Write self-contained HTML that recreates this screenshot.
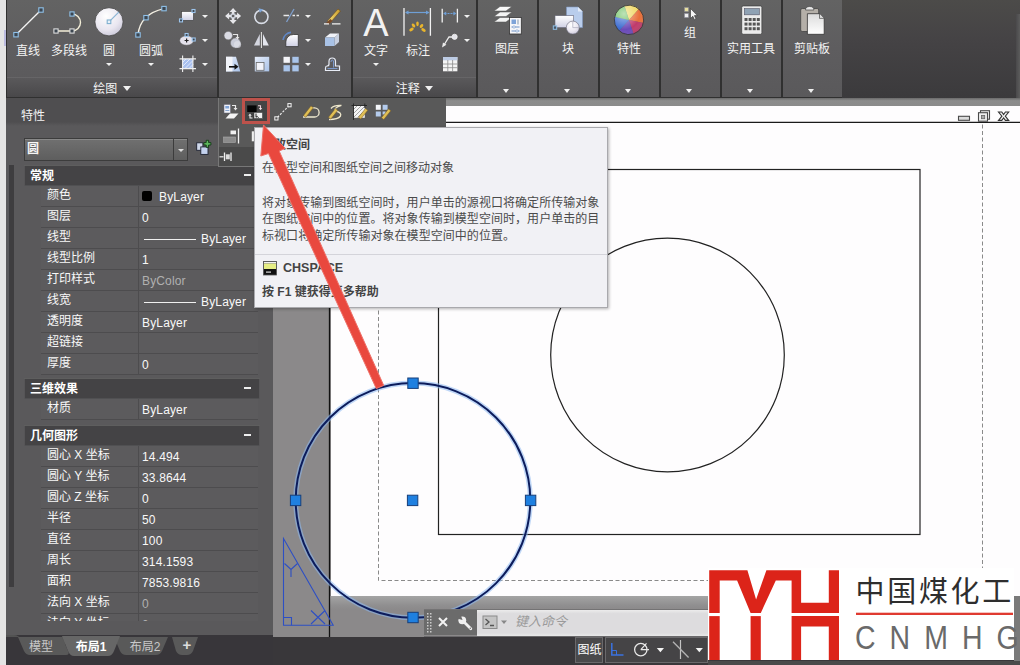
<!DOCTYPE html>
<html lang="zh">
<head>
<meta charset="utf-8">
<title>AutoCAD</title>
<style>
html,body{margin:0;padding:0;}
body{width:1020px;height:665px;overflow:hidden;position:relative;background:#3a3a3a;font-family:"Liberation Sans","Noto Sans CJK SC",sans-serif;font-size:12px;color:#eee;}
.abs{position:absolute;}
#stage{position:absolute;left:0;top:0;width:1020px;height:665px;overflow:hidden;}
/* ribbon */
#ribbon{left:6px;top:0;width:1014px;height:98px;background:#4a4a4a;}
.rp{position:absolute;top:0;height:96.500px;background:linear-gradient(#636363,#5e5d5f 50%,#5a595b);}
.rpt{position:absolute;left:0;right:0;bottom:0;height:19px;background:linear-gradient(#5a595b,#49484a);border-top:1px solid #666567;color:#f4f4f4;font-size:12px;line-height:22px;text-align:center;}
.lbl{position:absolute;color:#f4f4f4;font-size:12px;white-space:nowrap;transform:translateX(-50%);line-height:14px;}
.ti{display:inline-block;width:0;height:0;border-left:4px solid transparent;border-right:4px solid transparent;border-top:5px solid #f0f0f0;vertical-align:middle;margin-left:2px;margin-top:-2px;}
.tri{position:absolute;width:0;height:0;border-left:3px solid transparent;border-right:3px solid transparent;border-top:3.500px solid #f0f0f0;margin-left:1px;margin-top:0.500px;}
/* properties */
#props{left:6px;top:98px;width:267px;height:537px;background:#5a595b;}
.sec{position:absolute;left:18px;width:236px;height:20px;background:#444345;border-top:1px solid #5e5e5e;box-shadow:inset 1px 0 0 #565557,inset -1px 0 0 #565557,inset 0 -1px 0 #505052;color:#fff;font-weight:bold;font-size:12px;line-height:20px;}
.sec span{position:absolute;left:6px;top:0;}
.sec i{position:absolute;right:9px;top:8px;width:7px;height:2px;background:#eee;}
.row{position:absolute;left:35px;width:217px;height:20px;border-bottom:1px solid #4d4c4e;background:#5c5b5d;color:#f8f8f8;font-size:12px;line-height:19px;white-space:nowrap;}
.row .k{position:absolute;left:6px;top:0;}
.row .v{position:absolute;left:97px;top:0;right:0;height:20px;border-left:1px solid #4d4c4e;padding-left:3px;letter-spacing:0.150px;line-height:23px;}
.sw{position:absolute;left:3px;top:5px;width:10px;height:10px;background:#000;border-radius:2px;}
.ln{position:absolute;left:5px;top:11px;width:52px;height:1px;background:#f0f0f0;}
.dim{color:#b0b0b0;}
.t2{border-left-width:3.700px;border-right-width:3.700px;border-top-width:4px;margin-left:0.300px;}
</style>
</head>
<body>
<div id="stage">
<!-- BASE -->
<div class="abs" style="left:0;top:0;width:6px;height:665px;background:#e4e4e4;"></div>
<div class="abs" style="left:3.500px;top:30px;width:2px;height:16px;background:#a0a0dc;opacity:0.6;"></div>
<div class="abs" style="left:6px;top:0;width:1014px;height:99px;background:#303030;"></div>
<div class="abs" style="left:842px;top:0;width:178px;height:98px;background:linear-gradient(#4c4b49,#454345 40%,#3b3a3c);"></div>
<div class="abs" style="left:1016px;top:14px;width:4px;height:84px;background:linear-gradient(90deg,#4a494b,#5c5c5c);"></div>
<!-- ribbon panels -->
<div class="rp" style="left:7px;width:210px;"><div class="rpt">绘图 <span class="ti"></span></div></div>
<div class="rp" style="left:219px;width:132px;"></div>
<div class="rp" style="left:353px;width:123px;"><div class="rpt">注释 <span class="ti"></span></div></div>
<div class="rp" style="left:478px;width:59px;"></div>
<div class="rp" style="left:539px;width:59px;"></div>
<div class="rp" style="left:600px;width:59px;"></div>
<div class="rp" style="left:661px;width:59px;"></div>
<div class="rp" style="left:722px;width:59px;"></div>
<div class="rp" style="left:783px;width:59px;"></div>
<!-- ribbon labels -->
<div class="lbl" style="left:28px;top:44px;">直线</div>
<div class="lbl" style="left:69px;top:44px;">多段线</div>
<div class="lbl" style="left:109px;top:44px;">圆</div>
<div class="lbl" style="left:151px;top:44px;">圆弧</div>
<div class="lbl" style="left:376px;top:44px;">文字</div>
<div class="lbl" style="left:418px;top:44px;">标注</div>
<div class="lbl" style="left:507px;top:42px;">图层</div>
<div class="lbl" style="left:568px;top:42px;">块</div>
<div class="lbl" style="left:629px;top:42px;">特性</div>
<div class="lbl" style="left:690px;top:26px;">组</div>
<div class="lbl" style="left:751px;top:42px;">实用工具</div>
<div class="lbl" style="left:812px;top:42px;">剪贴板</div>
<div class="abs" style="left:363px;top:1px;font-size:38px;line-height:44px;color:#f2f2f2;width:26px;text-align:center;">A</div>
<!-- ribbon triangles -->
<div class="tri" style="left:105px;top:62px;"></div>
<div class="tri" style="left:147px;top:62px;"></div>
<div class="tri" style="left:201px;top:14px;"></div>
<div class="tri" style="left:201px;top:38px;"></div>
<div class="tri" style="left:201px;top:62px;"></div>
<div class="tri" style="left:304px;top:14px;"></div>
<div class="tri" style="left:304px;top:38px;"></div>
<div class="tri" style="left:304px;top:62px;"></div>
<div class="tri" style="left:372px;top:62px;"></div>
<div class="tri" style="left:463px;top:14px;"></div>
<div class="tri" style="left:463px;top:38px;"></div>
<div class="tri t2" style="left:503px;top:88px;"></div>
<div class="tri t2" style="left:564px;top:88px;"></div>
<div class="tri t2" style="left:625px;top:88px;"></div>
<div class="tri t2" style="left:686px;top:88px;"></div>
<div class="tri t2" style="left:747px;top:88px;"></div>
<div class="tri t2" style="left:808px;top:88px;"></div>

<svg class="abs" style="left:0;top:0;" width="1020" height="100" viewBox="0 0 1020 100">
<defs>
<linearGradient id="gLav" x1="0" y1="0" x2="0" y2="1"><stop offset="0" stop-color="#ffffff"/><stop offset="1" stop-color="#cfd0e4"/></linearGradient>
<radialGradient id="gCirc" cx="0.4" cy="0.3" r="0.8"><stop offset="0" stop-color="#ffffff"/><stop offset="0.6" stop-color="#e9e6f0"/><stop offset="1" stop-color="#c4c2d4"/></radialGradient>
<linearGradient id="gBlue" x1="0" y1="0" x2="1" y2="1"><stop offset="0" stop-color="#e8eefa"/><stop offset="1" stop-color="#a9c2e8"/></linearGradient>
<linearGradient id="gPen" x1="0" y1="0" x2="1" y2="0"><stop offset="0" stop-color="#f7e27a"/><stop offset="1" stop-color="#c89a2a"/></linearGradient>
<radialGradient id="gShine" cx="0.4" cy="0.25" r="0.9"><stop offset="0" stop-color="#fff" stop-opacity="0.55"/><stop offset="0.6" stop-color="#fff" stop-opacity="0"/><stop offset="1" stop-color="#000" stop-opacity="0.25"/></radialGradient>
<linearGradient id="gPaper" x1="0" y1="0" x2="0" y2="1"><stop offset="0" stop-color="#dcdcdc"/><stop offset="1" stop-color="#ffffff"/></linearGradient>
</defs>
<!-- line -->
<line x1="16" y1="34.700" x2="41" y2="10" stroke="#f4f4f4" stroke-width="1.300"/>
<rect x="13.8" y="32.5" width="4.4" height="4.4" fill="#3c4650" stroke="#8fc0e8" stroke-width="1.1"/><rect x="38.8" y="7.8" width="4.4" height="4.4" fill="#3c4650" stroke="#8fc0e8" stroke-width="1.1"/>
<!-- polyline -->
<path d="M56 31 H72 A8.500 8.500 0 0 0 72 14" fill="none" stroke="#f3eed8" stroke-width="1.400"/>
<rect x="53.9" y="28.9" width="4.2" height="4.2" fill="#3c4650" stroke="#ddd" stroke-width="1.1"/><rect x="69.9" y="28.9" width="4.2" height="4.2" fill="#3c4650" stroke="#ddd" stroke-width="1.1"/><rect x="69.9" y="11.9" width="4.2" height="4.2" fill="#3c4650" stroke="#8fc0e8" stroke-width="1.1"/>
<!-- circle -->
<circle cx="109" cy="21.800" r="14.100" fill="url(#gCirc)" stroke="#444" stroke-width="0.800"/>
<line x1="109" y1="21.800" x2="119" y2="11.800" stroke="#8ab4d4" stroke-width="1.200"/>
<rect x="107.2" y="20.0" width="3.6" height="3.6" fill="#e8f0f8" stroke="#7fb0d0" stroke-width="1.1"/>
<!-- arc -->
<path d="M138 34.900 Q140 14 164 8.600" fill="none" stroke="#f4f0e4" stroke-width="1.400"/>
<rect x="135.8" y="32.7" width="4.4" height="4.4" fill="#3c4650" stroke="#8fc0e8" stroke-width="1.1"/><rect x="143.8" y="15.5" width="4.4" height="4.4" fill="#3c4650" stroke="#8fc0e8" stroke-width="1.1"/><rect x="161.8" y="6.4" width="4.4" height="4.4" fill="#3c4650" stroke="#8fc0e8" stroke-width="1.1"/>
<!-- rect small -->
<rect x="181.500" y="11.400" width="12" height="9" fill="url(#gLav)" stroke="#444" stroke-width="0.700"/>
<rect x="179.5" y="18.9" width="3" height="3" fill="#3c4650" stroke="#9cc4ec" stroke-width="1.1"/><rect x="192.0" y="9.5" width="3" height="3" fill="#3c4650" stroke="#9cc4ec" stroke-width="1.1"/>
<!-- ellipse small -->
<ellipse cx="186.600" cy="40.500" rx="7" ry="4.800" fill="#e4e2ec" stroke="#555" stroke-width="0.600"/>
<path d="M184.600 40.500 h4 M186.600 38.500 v4" stroke="#222" stroke-width="1.200"/>
<rect x="185.1" y="33.5" width="3" height="3" fill="#3c4650" stroke="#9cc4ec" stroke-width="1.1"/><rect x="192.2" y="38.0" width="3" height="3" fill="#3c4650" stroke="#9cc4ec" stroke-width="1.1"/>
<!-- hatch small -->
<rect x="182.600" y="58.900" width="10.300" height="9.700" fill="#a9c0ee"/>
<path d="M183 62 l3 -3 M183 66 l7 -7 M185 68.500 l8 -8 M189 68.500 l4 -4" stroke="#dfe8fb" stroke-width="1"/>
<path d="M182.600 55.500 V72 M192.900 55.500 V72 M179.500 58.900 H196 M179.500 68.600 H196" stroke="#f0f0f0" stroke-width="1.100" fill="none"/>
<!-- MODIFY row1 -->
<!-- move -->
<g fill="#e6e6ea" stroke="none"><path d="M233.100 8 l3.600 4 h-2.300 v2.400 h-2.600 v-2.400 h-2.300z"/><path d="M233.100 24 l3.600 -4 h-2.300 v-2.400 h-2.600 v2.400 h-2.300z"/><path d="M225.100 16 l4 -3.600 v2.300 h2.400 v2.600 h-2.400 v2.300z"/><path d="M241.100 16 l-4 -3.600 v2.300 h-2.400 v2.600 h2.400 v2.300z"/></g>
<rect x="231.300" y="14.200" width="3.600" height="3.600" fill="none" stroke="#cfd4e0" stroke-width="1"/>
<!-- rotate -->
<circle cx="261.400" cy="16.800" r="6.600" fill="none" stroke="#d8dce6" stroke-width="1.600"/>
<path d="M258.500 8.300 l5 1.200 l-3.600 3.200z" fill="#7fa6d8"/>
<!-- trim -->
<path d="M283.500 15.500 h5.500 M292.500 15.500 h2.500 M296.500 15.500 h2.500" stroke="#e8e8e8" stroke-width="1.300"/>
<path d="M286.500 22 L294 9" stroke="#7f9fcc" stroke-width="1.300"/>
<!-- erase -->
<path d="M327.500 21 L338 9 L340.500 11 L330 23z" fill="url(#gPen)" stroke="#6b4a1c" stroke-width="0.600"/>
<path d="M326 23 l4.500 -4 l2 2 l-4 3.500z" fill="#7a4a2a"/>
<path d="M324 23.800 H329 M332 23.800 H340.500" stroke="#f2f2f2" stroke-width="1.300"/>
<!-- row2: copy -->
<circle cx="228.300" cy="35.600" r="4.200" fill="#dadbe4" stroke="#777" stroke-width="0.500"/>
<circle cx="235.500" cy="43" r="5" fill="#c9ccd8" stroke="#777" stroke-width="0.500"/>
<circle cx="237.500" cy="44.500" r="3.600" fill="#dfe1ea" opacity="0.700"/>
<path d="M233 34.500 h4.500 v3" fill="none" stroke="#e4e4e4" stroke-width="1.200"/><path d="M235.500 37 h4 l-2 2.600z" fill="#e4e4e4"/>
<!-- mirror -->
<path d="M259.800 34 V45.500 H254 Z" fill="#d4d6e0"/><path d="M263 34 V45.500 H268.800 Z" fill="#e4e6ee"/>
<line x1="261.400" y1="32" x2="261.400" y2="48" stroke="#e8e8e8" stroke-width="1"/>
<!-- fillet -->
<path d="M285.800 46.600 V42 A7.500 7.500 0 0 1 293.300 34.500 H298.300 V46.600 Z" fill="url(#gLav)" stroke="#333" stroke-width="0.800"/>
<path d="M283 40 A9 9 0 0 1 291 32.400" fill="none" stroke="#5f86c4" stroke-width="1.600"/>
<!-- box -->
<path d="M325 37.500 l5 -4 h9 l-4.500 4z" fill="#f0f2f8"/><path d="M334.500 37.500 l4.500 -4 v8.500 l-4.500 4z" fill="#c8d0e0"/><rect x="325" y="37.500" width="9.500" height="8.500" fill="#a9c2e6"/>

<!-- row3: stretch -->
<path d="M226 56.800 H236 L240.300 71.400 H226 Z" fill="url(#gBlue)"/><rect x="226" y="56.800" width="6.500" height="14.600" fill="#f2f4fa"/>
<path d="M229 66.800 h6" stroke="#111" stroke-width="1.600"/><path d="M234.500 63.800 l4 3 l-4 3z" fill="#111"/>
<!-- scale -->
<rect x="254.800" y="56.800" width="14.400" height="14.600" fill="url(#gBlue)"/>
<rect x="256.200" y="62.500" width="7.800" height="7.800" fill="#f2f3fa" stroke="#666" stroke-width="0.800"/>
<!-- array -->
<rect x="283.500" y="56.800" width="6.400" height="6" fill="#f4f4f8"/>
<rect x="292.300" y="56.800" width="6.400" height="6" fill="#a9c4ea"/>
<rect x="283.500" y="65.200" width="6.400" height="6.200" fill="#a9c4ea"/>
<rect x="292.300" y="65.200" width="6.400" height="6.200" fill="#a9c4ea"/>
<!-- offset -->
<path d="M325.500 70.500 H339.500 V66 H335.500 V61.500 Q335.500 58 332.200 58 Q329 58 329 61.500 V64 Q329 66 327 66 Q325.500 66 325.500 68 Z" fill="none" stroke="#e8ecf6" stroke-width="1.200"/>
<path d="M327.500 68.600 H337.500 M331 62 Q331 60 332.300 60 Q333.600 60 333.600 62 V67.500" fill="none" stroke="#7e9fd4" stroke-width="1"/>
<!-- ANNOTATE -->
<path d="M404 8 V35.800 M430.400 8 V35.800" stroke="#f2f2f2" stroke-width="1.300"/>
<path d="M406 12.500 H428.500" stroke="#6f9fd6" stroke-width="1.200"/><path d="M405 12.500 l3.500 -2 v4z M429.500 12.500 l-3.500 -2 v4z" fill="#6f9fd6"/>
<g fill="#e9b52c"><ellipse cx="411.500" cy="29.500" rx="2.400" ry="1.500" transform="rotate(-30 411.500 29.500)"/><ellipse cx="413.500" cy="25.500" rx="2.200" ry="1.400" transform="rotate(50 413.500 25.500)"/><ellipse cx="417.500" cy="23.800" rx="1.300" ry="2.400"/><ellipse cx="421.500" cy="26" rx="2.200" ry="1.400" transform="rotate(-50 421.500 26)"/><ellipse cx="423.500" cy="30" rx="2.400" ry="1.500" transform="rotate(30 423.500 30)"/></g>
<path d="M442.200 8.800 V22.600 M457.400 8.800 V22.600" stroke="#f2f2f2" stroke-width="1.300"/>
<path d="M444.500 13.500 H455" stroke="#6f9fd6" stroke-width="1.200" stroke-dasharray="2 1"/><path d="M443.200 13.500 l3 -2 v4z M456.400 13.500 l-3 -2 v4z" fill="#6f9fd6"/>
<circle cx="454.600" cy="36.800" r="2.600" fill="#e4e4ea" stroke="#f4f4f4" stroke-width="0.800"/>
<path d="M452 37 H449 L444 45" fill="none" stroke="#ececec" stroke-width="1.300"/><path d="M442 47.500 l1 -5 l3.400 2.200z" fill="#ececec"/>
<rect x="443" y="57" width="14.400" height="14.300" fill="#f4f4f4"/><rect x="443" y="57" width="14.400" height="3.300" fill="#bccbe4"/>
<path d="M447.800 60 V71.300 M452.600 60 V71.300 M443 64 H457.400 M443 67.700 H457.400" stroke="#8a8a8a" stroke-width="0.800"/>
<!-- LAYERS -->
<g stroke="#555" stroke-width="0.500"><path d="M494 22 l6 -4.500 h12 l-6 4.500z" fill="#f4f4f4"/><path d="M494 16.500 l6 -4.500 h12 l-6 4.500z" fill="#f4f4f4"/><path d="M494 11 l6 -4.500 h12 l-6 4.500z" fill="#fafafa"/></g>
<rect x="509.500" y="17.500" width="11.800" height="16.500" fill="#f6f6f8" stroke="#333" stroke-width="0.800"/>
<rect x="511.500" y="19.500" width="4.500" height="4.500" fill="#7fa4d8"/><path d="M518 19.500 v5" stroke="#9ab" stroke-width="1.200"/>
<path d="M511.500 27 h8 M511.500 31 h8" stroke="#6f93c8" stroke-width="1"/><circle cx="514" cy="27" r="1.200" fill="#fff" stroke="#6f93c8" stroke-width="0.600"/><circle cx="517" cy="31" r="1.200" fill="#fff" stroke="#6f93c8" stroke-width="0.600"/>
<!-- BLOCK -->
<path d="M566.500 7 H578 L582.500 11.500 V27.600 H566.500 Z" fill="#b9cdec" stroke="#7f97c0" stroke-width="0.600"/><path d="M578 7 V11.500 H582.500z" fill="#e4ecf8"/>
<rect x="555" y="15.700" width="18.700" height="11.900" fill="url(#gLav)" stroke="#667" stroke-width="0.600"/>
<circle cx="572.800" cy="27.600" r="6.500" fill="url(#gCirc)" stroke="#667" stroke-width="0.600"/><path d="M572.800 21 V27.600 H579.300" fill="none" stroke="#aab" stroke-width="0.700"/>
<rect x="553.300" y="25.900" width="3.400" height="3.400" fill="#4a5666" stroke="#8fc0e8" stroke-width="1"/>
<!-- COLOR WHEEL -->
<g transform="translate(629 19.900) rotate(-18)">
<path d="M0 0 L0 -14.700 A14.700 14.700 0 0 1 12.730 -7.350 Z" fill="#f0d860"/>
<path d="M0 0 L12.730 -7.350 A14.700 14.700 0 0 1 12.730 7.350 Z" fill="#e8703a"/>
<path d="M0 0 L12.730 7.350 A14.700 14.700 0 0 1 0 14.700 Z" fill="#c03a6a"/>
<path d="M0 0 L0 14.700 A14.700 14.700 0 0 1 -12.730 7.350 Z" fill="#6a4ab8"/>
<path d="M0 0 L-12.730 7.350 A14.700 14.700 0 0 1 -12.730 -7.350 Z" fill="#3a6ad0"/>
<path d="M0 0 L-12.730 -7.350 A14.700 14.700 0 0 1 0 -14.700 Z" fill="#6cc060"/>
<circle r="14.700" fill="url(#gShine)"/>
<circle r="14.700" fill="none" stroke="#3a3a3a" stroke-width="0.800"/>
</g>
<!-- GROUP -->
<rect x="684.500" y="7.500" width="4" height="4" fill="#e8e0a0" stroke="#889" stroke-width="0.500"/><rect x="684.500" y="13.500" width="4" height="4" fill="#f0f0f0" stroke="#889" stroke-width="0.500"/>
<path d="M690.500 8.500 V18.500 L692.800 16.200 L694.500 19.800 L696 19 L694.400 15.600 H697.400 Z" fill="#f6f6f6" stroke="#333" stroke-width="0.600"/>
<!-- CALC -->
<rect x="741.700" y="5.900" width="20.200" height="28.400" rx="1.500" fill="#ececec" stroke="#444" stroke-width="0.800"/>
<rect x="744.300" y="8.600" width="15" height="6.200" fill="#8fa2b4" stroke="#556" stroke-width="0.600"/>
<g fill="#555"><rect x="744.500" y="18" width="3" height="3"/><rect x="748.600" y="18" width="3" height="3"/><rect x="752.700" y="18" width="3" height="3"/><rect x="756.800" y="18" width="3" height="3"/><rect x="744.500" y="22.600" width="3" height="3"/><rect x="748.600" y="22.600" width="3" height="3"/><rect x="752.700" y="22.600" width="3" height="3"/><rect x="756.800" y="22.600" width="3" height="3"/><rect x="744.500" y="27.200" width="3" height="3"/><rect x="748.600" y="27.200" width="3" height="3"/><rect x="752.700" y="27.200" width="3" height="3"/><rect x="756.800" y="27.200" width="3" height="3"/></g>
<!-- CLIPBOARD -->
<rect x="800.700" y="8.500" width="18" height="23" rx="1.500" fill="#b4afa8" stroke="#444" stroke-width="0.800"/>
<path d="M805.500 10 Q805.500 6.500 809.700 6.500 Q813.900 6.500 813.900 10 Z" fill="#e8e8e8" stroke="#444" stroke-width="0.700"/>
<path d="M807.400 13.700 H819.500 L824.200 18.400 V34.300 H807.400 Z" fill="url(#gPaper)" stroke="#333" stroke-width="0.800"/><path d="M819.500 13.700 V18.400 H824.200" fill="#ddd" stroke="#333" stroke-width="0.600"/>
</svg>

<div id="props" class="abs">
<div class="abs" style="left:0;top:0;width:267px;height:28px;background:linear-gradient(#4f4e50 85%,#5a595b);"></div>
<div class="abs" style="left:15px;top:9.500px;font-size:12px;color:#f4f4f4;line-height:16px;">特性</div>
<div class="abs" style="left:18px;top:40px;width:148px;height:21px;background:linear-gradient(#707070,#5e5e5e);border:1px solid #3c3c3c;border-right:none;box-shadow:inset 0 1px 0 #888;"><span style="position:absolute;left:2px;top:2px;font-size:12px;font-weight:bold;color:#f6f6f6;line-height:16px;">圆</span></div>
<div class="abs" style="left:167px;top:40px;width:13px;height:21px;background:linear-gradient(#707070,#5e5e5e);border:1px solid #3c3c3c;box-shadow:inset 0 1px 0 #888;"><span class="tri" style="left:3px;top:9px;border-left-width:3px;border-right-width:3px;border-top-color:#ddd;"></span></div>
<svg class="abs" style="left:188px;top:40px;" width="22" height="20" viewBox="194 138 22 20">
<rect x="196.700" y="142.800" width="6.200" height="7.500" fill="#cfd8ea" stroke="#1c2030" stroke-width="0.900"/>
<rect x="200.800" y="146.900" width="7.200" height="7.500" fill="#c4d2ee" stroke="#1c2030" stroke-width="0.900"/>
<path d="M206.200 140.300 h2.400 v2.300 h2.300 v2.400 h-2.300 v2.300 h-2.400 v-2.300 h-2.300 v-2.400 h2.300z" fill="#5fb860" stroke="#123a14" stroke-width="0.900"/>
</svg>
<div class="abs" style="left:3px;top:67px;width:4.500px;height:422px;background:#3e3d3f;"></div>
<div class="abs" style="left:0;top:62px;width:267px;height:461px;overflow:hidden;"><div class="abs" style="left:0;top:-62px;">
<div class="sec" style="top:67px;"><span>常规</span><i></i></div>
<div class="row" style="top:88px;"><span class="k">颜色</span><span class="v "><i class="sw"></i><span style="margin-left:17px">ByLayer</span></span></div>
<div class="row" style="top:109px;"><span class="k">图层</span><span class="v ">0</span></div>
<div class="row" style="top:130px;"><span class="k">线型</span><span class="v "><i class="ln"></i><span style="margin-left:59px">ByLayer</span></span></div>
<div class="row" style="top:151px;"><span class="k">线型比例</span><span class="v ">1</span></div>
<div class="row" style="top:172px;"><span class="k">打印样式</span><span class="v dim">ByColor</span></div>
<div class="row" style="top:193px;"><span class="k">线宽</span><span class="v "><i class="ln"></i><span style="margin-left:59px">ByLayer</span></span></div>
<div class="row" style="top:214px;"><span class="k">透明度</span><span class="v ">ByLayer</span></div>
<div class="row" style="top:235px;"><span class="k">超链接</span><span class="v "></span></div>
<div class="row" style="top:256px;"><span class="k">厚度</span><span class="v ">0</span></div>
<div class="sec" style="top:280px;"><span>三维效果</span><i></i></div>
<div class="row" style="top:301px;"><span class="k">材质</span><span class="v ">ByLayer</span></div>
<div class="sec" style="top:327px;"><span>几何图形</span><i></i></div>
<div class="row" style="top:348px;"><span class="k">圆心 X 坐标</span><span class="v ">14.494</span></div>
<div class="row" style="top:369px;"><span class="k">圆心 Y 坐标</span><span class="v ">33.8644</span></div>
<div class="row" style="top:390px;"><span class="k">圆心 Z 坐标</span><span class="v ">0</span></div>
<div class="row" style="top:411px;"><span class="k">半径</span><span class="v ">50</span></div>
<div class="row" style="top:432px;"><span class="k">直径</span><span class="v ">100</span></div>
<div class="row" style="top:453px;"><span class="k">周长</span><span class="v ">314.1593</span></div>
<div class="row" style="top:474px;"><span class="k">面积</span><span class="v ">7853.9816</span></div>
<div class="row" style="top:495px;"><span class="k">法向 X 坐标</span><span class="v dim">0</span></div>
<div class="row" style="top:516px;"><span class="k">法向 Y 坐标</span><span class="v dim">0</span></div>
</div></div>
</div>
<div class="abs" style="left:6px;top:635px;width:267px;height:30px;background:#38363a;"></div>
<svg class="abs" style="left:6px;top:635px;" width="330" height="30" viewBox="0 0 330 30">
<path d="M0 0 H8 Q13 0 15 5 L19 15 Q21 20 26 20 H50 Q54 20 56 16 L62 2 H0Z" fill="#535353"/>
<path d="M12 2 H56 L62 16 Q64 20 60 20 H24 Q20 20 18 16 Z" fill="#595959"/>
<path d="M108 2 H162 L156 16 Q154 20 150 20 H120 Q116 20 114 16 Z" fill="#595959"/>
<path d="M166 2 H192 L187 16 Q185 20 181 20 H176 Q172 20 170 16 Z" fill="#595959"/>
<path d="M56 1 H114 L108 16 Q106 21 102 21 H68 Q64 21 62 16 Z" fill="#666"/>
</svg>
<div class="lbl" style="left:41px;top:640px;color:#c8c8c8;">模型</div>
<div class="lbl" style="left:91px;top:640px;color:#fff;font-weight:bold;">布局1</div>
<div class="lbl" style="left:145px;top:640px;color:#c8c8c8;">布局2</div>
<div class="lbl" style="left:187px;top:638px;color:#ddd;font-weight:bold;font-size:15px;">+</div>


<!-- drawing area -->
<div class="abs" style="left:273px;top:98px;width:747px;height:539px;background:#8b898a;"></div>
<div class="abs" style="left:445px;top:98px;width:575px;height:9px;background:linear-gradient(#6a6a6a,#8c8c8c 30%,#8b8b8b);"></div>
<div class="abs" style="left:330px;top:596px;width:690px;height:14px;background:linear-gradient(#a4a4a4,#8f8e8f 70%,#8b898a);"></div>
<div class="abs" style="left:331px;top:106px;width:689px;height:490px;background:#fefdfe;"></div>
<svg class="abs" style="left:0;top:0;" width="1020" height="665" viewBox="0 0 1020 665">
<line x1="329.5" y1="98" x2="329.5" y2="637" stroke="#111" stroke-width="1.3"/>
<line x1="446" y1="122.3" x2="1020" y2="122.3" stroke="#1a1a1a" stroke-width="1.2"/>
<path d="M378.5 122 V580.5 H982.5 V122" fill="none" stroke="#8a8a8a" stroke-width="1" stroke-dasharray="4 2.5"/>
<rect x="438.5" y="169.5" width="481.5" height="365" fill="none" stroke="#222" stroke-width="1.2"/>
<circle cx="667.5" cy="355" r="116.8" fill="none" stroke="#222" stroke-width="1.2"/>
<!-- window controls -->
<g fill="none" stroke="#4a4a4a" stroke-width="1.100">
<rect x="958.500" y="116.300" width="11" height="4" fill="#dcdcdc"/>
<rect x="980.500" y="110.700" width="9" height="8.500" fill="#f4f4f4"/><rect x="978.500" y="112.700" width="9" height="8.500" fill="#f0f0f0"/><rect x="981.500" y="115.500" width="3.200" height="3.200" fill="#aaa" stroke="#666" stroke-width="0.800"/>
<path d="M998.500 112 h3.300 l1.800 2.500 l1.800 -2.500 h3.300 l-3.400 4.200 l3.400 4.200 h-3.300 l-1.800 -2.500 l-1.800 2.500 h-3.300 l3.400 -4.200z" fill="#f4f4f4" stroke="#333"/>
</g>
<!-- UCS icon -->
<g fill="none" stroke="#2d4fc4" stroke-width="1.1">
<path d="M283.500 538.500 V625.300 H333.200 Z"/>
<path d="M283.500 617.500 H291.500 V625.300"/>
<path d="M284.500 563.500 L291 569.500 L297.500 563.500 M291 569.500 V577"/>
<path d="M311 610.500 L325 624 M325 610.500 L311 624"/>
</g>
<!-- selected circle -->
<circle cx="413" cy="500.400" r="117.300" fill="none" stroke="#8db8f0" stroke-width="5" opacity="0.55"/>
<circle cx="413" cy="500.400" r="117.300" fill="none" stroke="#0c1c5c" stroke-width="2"/>
<g fill="#1f80e0" stroke="#173f7a" stroke-width="1">
<rect x="407.8" y="378.0" width="10.4" height="10.4"/>
<rect x="407.4" y="495.2" width="10.4" height="10.4"/>
<rect x="290.4" y="495.2" width="10.4" height="10.4"/>
<rect x="525.4" y="495.2" width="10.4" height="10.4"/>
<rect x="407.8" y="612.3" width="10.4" height="10.4"/>
</g>
</svg>
<!-- command line -->
<div class="abs" style="left:424px;top:610px;width:53px;height:25px;background:#6b6b6b;"></div>
<div class="abs" style="left:477px;top:610px;width:543px;height:25.500px;background:linear-gradient(#ececec,#dddcde 14%,#dddcde 88%,#e8e8e8);"></div>
<div class="abs" style="left:424px;top:635.500px;width:596px;height:2.500px;background:#6a696b;"></div>
<div class="abs" style="left:424px;top:609px;width:596px;height:1px;background:#747374;"></div>
<div class="abs" style="left:515px;top:613px;font-size:13px;font-style:italic;color:#9a9a9a;line-height:18px;">键入命令</div>
<svg class="abs" style="left:424px;top:610px;" width="90" height="25" viewBox="0 0 90 25">
<g fill="#ccc"><rect x="3" y="3" width="1.500" height="1.500"/><rect x="6" y="3" width="1.500" height="1.500"/><rect x="3" y="6" width="1.500" height="1.500"/><rect x="6" y="6" width="1.500" height="1.500"/><rect x="3" y="9" width="1.500" height="1.500"/><rect x="6" y="9" width="1.500" height="1.500"/><rect x="3" y="12" width="1.500" height="1.500"/><rect x="6" y="12" width="1.500" height="1.500"/><rect x="3" y="15" width="1.500" height="1.500"/><rect x="6" y="15" width="1.500" height="1.500"/><rect x="3" y="18" width="1.500" height="1.500"/><rect x="6" y="18" width="1.500" height="1.500"/><rect x="3" y="21" width="1.500" height="1.500"/><rect x="6" y="21" width="1.500" height="1.500"/></g>
<path d="M15 8 L23 16 M23 8 L15 16" stroke="#f2f2f2" stroke-width="2" fill="none"/>
<path d="M46.800 18.800 L40 12" stroke="#f0f0f0" stroke-width="2.800" stroke-linecap="round" fill="none"/><circle cx="38.300" cy="10.300" r="3.900" fill="#f0f0f0"/><path d="M38.600 10 L33 8.500 L36.500 4.500 Z" fill="#6b6b6b"/><circle cx="46.300" cy="18.300" r="0.700" fill="#6b6b6b"/>
<rect x="59" y="6" width="14" height="12.500" fill="#c4c4c4" stroke="#8a8a8a" stroke-width="1"/>
<path d="M61.500 9 L65 12 L61.500 15 M66 15.500 H70" stroke="#555" stroke-width="1.300" fill="none"/>
<path d="M77 10.500 h6 l-3 3.500z" fill="#888"/>
</svg>
<!-- status bar -->
<div class="abs" style="left:273px;top:637px;width:747px;height:28px;background:#39373a;"></div>
<div class="abs" style="left:575px;top:637px;width:28px;height:25.500px;background:#4a494b;border:1px solid #6a696b;box-sizing:border-box;"></div>
<div class="lbl" style="left:589.500px;top:642.500px;color:#fff;">图纸</div>
<div class="abs" style="left:605px;top:637px;width:103px;height:25.500px;background:#454446;border:1px solid #6a696b;box-sizing:border-box;"></div>
<svg class="abs" style="left:605px;top:637px;" width="103" height="28" viewBox="605 637 103 28">
<path d="M611.800 643 V655 H623.500" stroke="#3a72e0" stroke-width="1.500" fill="none"/>
<path d="M612 650.500 H616.500 V655" stroke="#3a72e0" stroke-width="1" fill="none"/>
<circle cx="640.800" cy="649.600" r="6.200" stroke="#e8e8e8" stroke-width="1.300" fill="none"/>
<path d="M640.800 649.600 H649 M640.800 649.600 L646.500 643.300" stroke="#e8e8e8" stroke-width="1.200" fill="none"/>
<path d="M656.800 648 h7.200 l-3.600 4.200z" fill="#f4f4f4"/>
<path d="M680.500 640 V659" stroke="#c4c4c4" stroke-width="1.200"/>
<path d="M673 641.800 L688.600 657.500" stroke="#b4b4b4" stroke-width="1.300"/>
<path d="M695.700 648 h7.200 l-3.600 4.200z" fill="#f4f4f4"/>
</svg>
<!-- logo -->
<div class="abs" style="left:708px;top:568px;width:306px;height:92px;background:#fff;"></div>
<div class="abs" style="left:1014px;top:596px;width:6px;height:65px;background:#7a7a7a;"></div>
<div class="abs" style="left:708px;top:660.500px;width:312px;height:5px;background:#4a4a4a;"></div>
<svg class="abs" style="left:708px;top:566px;" width="306" height="94" viewBox="708 566 306 94">
<g fill="#dc2419">
<path d="M709.200 570.300 H747.400 L756.100 599.500 L766.400 570.300 H801.100 V602.700 H828.800 V570.300 H839 V612.900 H791.600 V580.500 H775.800 L760.800 612.900 H750.600 L737.100 580.500 H719.700 V612.900 H709.200 Z"/>
<rect x="709.200" y="616.100" width="10.500" height="43.900"/>
<rect x="750.600" y="616.100" width="10.200" height="43.900"/>
<path d="M791.600 616.100 H839 V660 H828.800 V626.400 H801.100 V660 H791.600 Z"/>
</g>
<rect x="856" y="612.700" width="157" height="2.300" fill="#e03a30"/>
</svg>
<div class="abs" style="left:855.500px;top:570.200px;font-size:29px;line-height:44px;color:#2e2e2e;white-space:nowrap;letter-spacing:2.700px;">中国煤化工</div>
<div class="abs" style="left:855px;top:620.500px;font-size:28.500px;line-height:32px;color:#6a6a6a;white-space:nowrap;letter-spacing:14px;transform:scaleY(1.180);transform-origin:50% 54%;">CNMHG</div>

<!-- expanded modify panel -->
<div class="abs" style="left:218px;top:98px;width:228px;height:69px;background:#595959;border-left:1px solid #777;border-bottom:1px solid #777;box-sizing:border-box;"></div>
<div class="abs" style="left:219px;top:147px;width:40px;height:19px;background:#4a4a4a;"></div>
<!-- red highlight box -->
<div class="abs" style="left:242px;top:98px;width:28px;height:26px;background:#444;border:3px solid #bd524b;box-sizing:border-box;"></div>

<svg class="abs" style="left:216px;top:96px;" width="240" height="74" viewBox="216 96 240 74">
<defs><linearGradient id="gPen2" x1="0" y1="0" x2="1" y2="1"><stop offset="0" stop-color="#f8e680"/><stop offset="1" stop-color="#c8982a"/></linearGradient></defs>
<!-- icon1 -->
<rect x="224" y="104.500" width="6.500" height="8.500" fill="#f0f2f8" stroke="#667" stroke-width="0.500"/><rect x="225.300" y="106" width="3.800" height="2.500" fill="#7fa4d8"/><path d="M225.300 110.500 h4" stroke="#6f93c8" stroke-width="0.800"/>
<path d="M232 105.500 h3.500 v3" fill="none" stroke="#e8e8e8" stroke-width="1.200"/><path d="M233.500 108 h4 l-2 2.600z" fill="#e8e8e8"/>
<path d="M225.500 118.500 l4.500 -5 h8.500 l-4.500 5z" fill="#f4f4f4"/>
<!-- icon2 (highlighted) -->
<rect x="247.200" y="105.400" width="9.400" height="6.600" fill="#050505"/>
<rect x="254" y="112.500" width="8.500" height="6" fill="#f2f2f2" stroke="#333" stroke-width="0.500"/><path d="M256 113.500 v3.800 l1.200 -1 l1.300 1.500" fill="none" stroke="#111" stroke-width="0.900"/>
<path d="M258 105.800 h2.500 v2.500" fill="none" stroke="#f0d0d8" stroke-width="1.100"/><path d="M258.800 108 h3.400 l-1.700 2.200z" fill="#f4e4ea"/>
<path d="M252.500 118 h-2.500 v-2.500" fill="none" stroke="#f0f0f0" stroke-width="1.100"/><path d="M248.300 115.800 h3.400 l-1.700 -2.200z" fill="#f4f4f4"/>
<!-- icon3 -->
<path d="M277.500 117.300 L288.500 106.300" stroke="#f0f0f0" stroke-width="1.100" stroke-dasharray="2.200 1.400"/>
<rect x="274.800" y="116.800" width="3.200" height="3.200" fill="#555" stroke="#f4f4f4" stroke-width="1"/><rect x="287.900" y="103.600" width="3.200" height="3.200" fill="#555" stroke="#f4f4f4" stroke-width="1"/>
<!-- icon4 pencil+arc -->
<path d="M303 117 H314.500 A4.600 4.600 0 0 0 314.500 107.800 H311" fill="none" stroke="#f0ead0" stroke-width="1.300"/>
<path d="M303.500 115.500 L311 106 L313.300 107.800 L305.800 117.300 Z" fill="url(#gPen2)" stroke="#7a5a1c" stroke-width="0.500"/>
<!-- icon5 pencil+spline -->
<path d="M331 108.500 Q334 105 341.500 105.500 M341.500 105.500 Q333 108 335.500 111 Q342 112.500 340.500 116 Q338 119.500 329 119.500" fill="none" stroke="#efe8cc" stroke-width="1.300"/>
<path d="M328.500 117.300 L335.500 108.500 L337.800 110.300 L330.800 119.100 Z" fill="url(#gPen2)" stroke="#7a5a1c" stroke-width="0.500"/>
<!-- icon6 hatch edit -->
<rect x="353.500" y="105.500" width="11.300" height="12.300" fill="#f4f4f4"/>
<path d="M354 109 l3.500 -3.500 M354 113 l7.500 -7.500 M354 117 l10.500 -10.500 M357.500 117.500 l7 -7" stroke="#8a8a8a" stroke-width="0.800"/>
<path d="M351.500 105.500 H367 M353.500 103.500 V120 M364.800 103.500 V108" stroke="#222" stroke-width="0.900"/>
<path d="M358.500 117.300 L365.500 108.500 L367.800 110.300 L360.800 119.100 Z" fill="url(#gPen2)" stroke="#7a5a1c" stroke-width="0.500"/>
<!-- icon7 array edit -->
<rect x="375.800" y="104.800" width="5" height="5" fill="#f4f6fa"/><rect x="382.600" y="104.800" width="5" height="5" fill="#b4cbec"/><rect x="375.800" y="111.500" width="5" height="5" fill="#b4cbec"/><rect x="382.600" y="111.500" width="3" height="3" fill="#b4cbec"/>
<path d="M381.500 117.800 L388.500 109 L390.800 110.800 L383.800 119.600 Z" fill="url(#gPen2)" stroke="#7a5a1c" stroke-width="0.500"/>
<!-- row2 icon1 -->
<rect x="223.600" y="137" width="12" height="5.500" fill="#8c8c8c" stroke="#aaa" stroke-width="0.600"/><rect x="230.500" y="130.500" width="5.500" height="3.800" fill="#f0f0f0"/><path d="M238.500 128.500 V143.500" stroke="#f2f2f2" stroke-width="1.300"/>
<!-- row2 icon2 (partial) -->
<rect x="251.800" y="131.300" width="2.400" height="10" fill="#f2f2f2"/>
<!-- pin -->
<path d="M219.500 156.800 h4" stroke="#f0f0f0" stroke-width="1.200"/><path d="M224.500 152.500 v8.500 M231 152.500 v8.500" stroke="#f0f0f0" stroke-width="1.300"/><rect x="225.800" y="154.300" width="4" height="5" fill="#ddd"/>
</svg>

<!-- tooltip -->
<div class="abs" style="left:254px;top:127px;width:354px;height:181px;background:#f1f1f5;border:1px solid #a9a9ad;box-sizing:border-box;box-shadow:1px 1px 3px rgba(0,0,0,0.3);color:#4a4a4a;font-size:12px;">
<div class="abs" style="left:7px;top:9px;font-weight:bold;color:#444;font-size:12px;line-height:16px;white-space:nowrap;">更改空间</div>
<div class="abs" style="left:7px;top:32px;line-height:16px;white-space:nowrap;">在模型空间和图纸空间之间移动对象</div>
<div class="abs" style="left:7px;top:67px;line-height:16.300px;white-space:nowrap;letter-spacing:0.050px;">将对象传输到图纸空间时，用户单击的源视口将确定所传输对象<br>在图纸空间中的位置。将对象传输到模型空间时，用户单击的目<br>标视口将确定所传输对象在模型空间中的位置。</div>
<div class="abs" style="left:0;top:126px;width:352px;height:1px;background:#d4d4da;"></div>
<svg class="abs" style="left:8px;top:133px;" width="14" height="15" viewBox="0 0 14 15"><rect x="0.500" y="0.500" width="13" height="13.500" fill="#111" stroke="#555" stroke-width="0.800"/><rect x="1" y="1" width="12" height="1.600" fill="#f4f4f4"/><rect x="1" y="2.600" width="12" height="5.400" fill="#e6ee84"/><rect x="3" y="10.500" width="5" height="1.200" fill="#ddd"/></svg>
<div class="abs" style="left:28px;top:132px;font-weight:bold;color:#444;font-size:12.500px;line-height:16px;white-space:nowrap;">CHSPACE</div>
<div class="abs" style="left:7px;top:156px;font-weight:bold;color:#444;font-size:12px;line-height:16px;white-space:nowrap;">按 F1 键获得更多帮助</div>
</div>
<!-- arrow -->
<svg class="abs" style="left:0;top:0;" width="1020" height="665" viewBox="0 0 1020 665">
<g><path d="M263.500 124.900 L285.200 148.400 L279.200 151 L383.700 385.400 L376.300 388.600 L268.500 153.500 L260.800 156 Z" fill="#e9483e" stroke="#ee7068" stroke-width="1" stroke-linejoin="round"/></g>
</svg>


<!-- END -->
</div>
</body>
</html>
